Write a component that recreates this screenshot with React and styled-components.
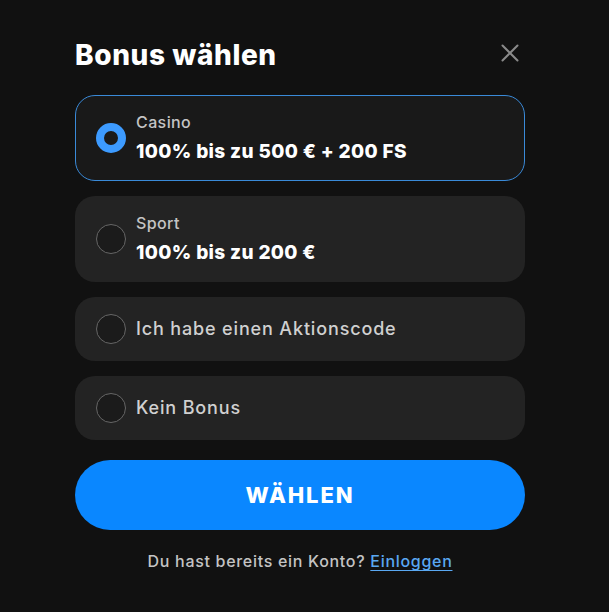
import React, { useState } from "react";
import styled, { createGlobalStyle } from "styled-components";

const GlobalStyle = createGlobalStyle`
  html, body {
    margin: 0;
    padding: 0;
    background: #111111;
  }
  body {
    font-family: Inter, "Noto Sans", "Liberation Sans", sans-serif;
    color: #ffffff;
  }
`;

const Modal = styled.div`
  width: 450px;
  padding: 35px 0 40px 75px;
`;

const Header = styled.div`
  display: flex;
  align-items: center;
  justify-content: space-between;
  height: 40px;
  margin-bottom: 20px;
`;

const Title = styled.h2`
  margin: 0;
  font-size: 28px;
  font-weight: 800;
  letter-spacing: 0.6px;
  color: #ffffff;
`;

const CloseButton = styled.button`
  width: 30px;
  height: 30px;
  padding: 0;
  border: none;
  background: transparent;
  display: flex;
  align-items: center;
  justify-content: center;
  cursor: pointer;
  transform: translateY(-2px);
`;

const Options = styled.div`
  display: flex;
  flex-direction: column;
  gap: 15px;
`;

const Option = styled.label`
  display: flex;
  align-items: center;
  gap: 10px;
  padding: 16px 20px;
  border-radius: 20px;
  border: 1px solid ${(p) => (p.$active ? "#3a8ad8" : "transparent")};
  background: ${(p) => (p.$active ? "#191919" : "#232323")};
  cursor: pointer;
`;

const Radio = styled.span`
  flex: none;
  box-sizing: border-box;
  width: 30px;
  height: 30px;
  border-radius: 50%;
  background: #1b1b1b;
  border: ${(p) => (p.$active ? "8px solid #3d9bff" : "1px solid #666666")};
`;

const Texts = styled.div`
  display: flex;
  flex-direction: column;
  gap: 8px;
`;

const Label = styled.span`
  font-size: 16px;
  line-height: 20px;
  font-weight: 500;
  letter-spacing: 0.4px;
  color: #c4c4c4;
`;

const Value = styled.span`
  font-size: 19px;
  line-height: 24px;
  font-weight: 800;
  letter-spacing: 0.35px;
  color: #ffffff;
`;

const Plain = styled.span`
  font-size: 18px;
  line-height: 24px;
  font-weight: 500;
  letter-spacing: 0.85px;
  color: #d0d0d0;
`;

const Submit = styled.button`
  width: 100%;
  height: 70px;
  margin-top: 20px;
  border: none;
  border-radius: 35px;
  background: #0a87ff;
  color: #ffffff;
  font-family: inherit;
  font-size: 22px;
  font-weight: 800;
  letter-spacing: 1.9px;
  cursor: pointer;
`;

const Footer = styled.p`
  margin: 19px 0 0;
  text-align: center;
  font-size: 16px;
  line-height: 24px;
  font-weight: 500;
  letter-spacing: 0.7px;
  color: #c4c4c4;
`;

const Link = styled.a`
  color: #5aa8f2;
  text-decoration: underline;
  text-underline-offset: 3px;
`;

const options = [
  { id: "casino", label: "Casino", value: "100% bis zu 500 € + 200 FS" },
  { id: "sport", label: "Sport", value: "100% bis zu 200 €" },
  { id: "code", text: "Ich habe einen Aktionscode" },
  { id: "none", text: "Kein Bonus" },
];

const App = () => {
  const [selected, setSelected] = useState("casino");

  return (
    <>
      <GlobalStyle />
      <Modal>
        <Header>
          <Title>Bonus wählen</Title>
          <CloseButton aria-label="Schließen">
            <svg width="18" height="18" viewBox="0 0 18 18">
              <path
                d="M1.5 1.5 L16.5 16.5 M16.5 1.5 L1.5 16.5"
                stroke="#8a8a8a"
                strokeWidth="2"
                strokeLinecap="round"
              />
            </svg>
          </CloseButton>
        </Header>
        <Options>
          {options.map((o) => (
            <Option
              key={o.id}
              $active={selected === o.id}
              onClick={() => setSelected(o.id)}
            >
              <Radio $active={selected === o.id} />
              {o.text ? (
                <Plain>{o.text}</Plain>
              ) : (
                <Texts>
                  <Label>{o.label}</Label>
                  <Value>{o.value}</Value>
                </Texts>
              )}
            </Option>
          ))}
        </Options>
        <Submit>WÄHLEN</Submit>
        <Footer>
          Du hast bereits ein Konto? <Link href="#">Einloggen</Link>
        </Footer>
      </Modal>
    </>
  );
};

export default App;
